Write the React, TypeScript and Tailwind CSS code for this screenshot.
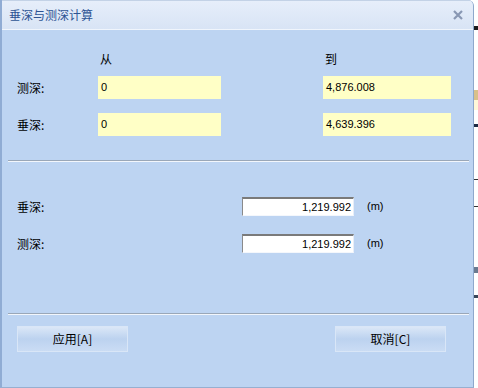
import React from 'react';

const cjk = "font-['Noto_Sans_CJK_SC','Noto_Sans',sans-serif]";
const num = "font-['Liberation_Sans','Noto_Sans_CJK_SC',sans-serif]";

function YellowBox({ value, width }: { value: string; width: string }) {
  return (
    <div className={`${width} h-[23px] bg-[#ffffc6] flex items-center pl-[3px] text-[11px] text-black ${num}`}>
      {value}
    </div>
  );
}

function SunkenBox({ value }: { value: string }) {
  return (
    <div className={`w-[112px] h-[19px] bg-white border-t-2 border-l border-t-[#7a7a7a] border-l-[#8a8a8a] border-r border-b border-r-[#e8eef8] border-b-[#f4f7fc] flex items-center justify-end pr-[2px] text-[11px] text-black ${num}`}>
      {value}
    </div>
  );
}

function Divider() {
  return (
    <div className="ml-[6px] w-[461px] flex flex-col">
      <div className="h-px bg-[#9aa7b8]" />
      <div className="h-px bg-[#f2f6fc]" />
    </div>
  );
}

function Button({ label }: { label: string }) {
  return (
    <div className={`w-[111px] h-[26px] border border-[#d9e6f7] bg-gradient-to-b from-[#dbe7f7] via-[#bcd2ef] to-[#cadcf4] flex items-center justify-center text-[12px] text-black ${cjk}`}>
      {label}
    </div>
  );
}

export default function App() {
  return (
    <div className="w-[478px] h-[388px] flex bg-white overflow-hidden">
      <div className="w-[474px] h-[388px] flex flex-col bg-[#bdd4f2] border-l-2 border-l-[#90acd4] border-r border-r-[#8ea8cc] border-b border-b-[#97afd0] rounded-tr-[6px] overflow-hidden">
        {/* title bar */}
        <div className="h-[30px] shrink-0 flex items-center justify-between bg-gradient-to-b from-[#e6eefa] to-[#d8e4f5] border-t border-t-[#c3d2e6] border-b border-b-[#f0f5fc]">
          <span className={`pl-[7px] text-[12px] text-[#2d5494] ${cjk}`}>垂深与测深计算</span>
          <svg className="mr-[10px] w-[10px] h-[10px]" viewBox="0 0 10 10">
            <path d="M1 1 L9 9 M9 1 L1 9" stroke="#8897b3" strokeWidth="2.2" />
          </svg>
        </div>

        <div className={`flex flex-col text-[12px] text-black ${cjk}`}>
          {/* headers */}
          <div className="mt-[21px] h-[16px] flex items-center leading-[16px]">
            <span className="ml-[98px] w-[225px]">从</span>
            <span>到</span>
          </div>

          <div className="mt-[9px] flex items-center">
            <span className="ml-[15px] w-[81px]">测深:</span>
            <YellowBox value="0" width="w-[123px]" />
            <div className="w-[102px]" />
            <YellowBox value="4,876.008" width="w-[128px]" />
          </div>

          <div className="mt-[14px] flex items-center">
            <span className="ml-[15px] w-[81px]">垂深:</span>
            <YellowBox value="0" width="w-[123px]" />
            <div className="w-[102px]" />
            <YellowBox value="4,639.396" width="w-[128px]" />
          </div>

          <div className="mt-[24px]">
            <Divider />
          </div>

          <div className="mt-[35px] flex items-center">
            <span className="ml-[15px] w-[225px]">垂深:</span>
            <SunkenBox value="1,219.992" />
            <span className={`ml-[13px] text-[11px] ${num}`}>(m)</span>
          </div>

          <div className="mt-[18px] flex items-center">
            <span className="ml-[15px] w-[225px]">测深:</span>
            <SunkenBox value="1,219.992" />
            <span className={`ml-[13px] text-[11px] ${num}`}>(m)</span>
          </div>

          <div className="mt-[60px]">
            <Divider />
          </div>

          <div className="mt-[11px] flex">
            <div className="ml-[15px]">
              <Button label="应用[A]" />
            </div>
            <div className="ml-[207px]">
              <Button label="取消[C]" />
            </div>
          </div>
        </div>
      </div>

      {/* background window peeking out */}
      <div className="w-[4px] h-[388px] flex flex-col bg-white">
        <div className="h-[26px]" />
        <div className="h-[4px] bg-[#1c1c1c]" />
        <div className="h-[60px]" />
        <div className="h-[10px] bg-[#d9c08a]" />
        <div className="h-[10px] bg-[#fff8d8]" />
        <div className="h-[14px]" />
        <div className="h-[3px] bg-[#1c2a44]" />
        <div className="h-[52px]" />
        <div className="h-px bg-[#333]" />
        <div className="h-[26px]" />
        <div className="h-px bg-[#333]" />
        <div className="h-[60px]" />
        <div className="h-[6px] bg-[#6b7a90]" />
        <div className="h-[22px]" />
        <div className="h-[3px] bg-[#3a4658]" />
      </div>
    </div>
  );
}
